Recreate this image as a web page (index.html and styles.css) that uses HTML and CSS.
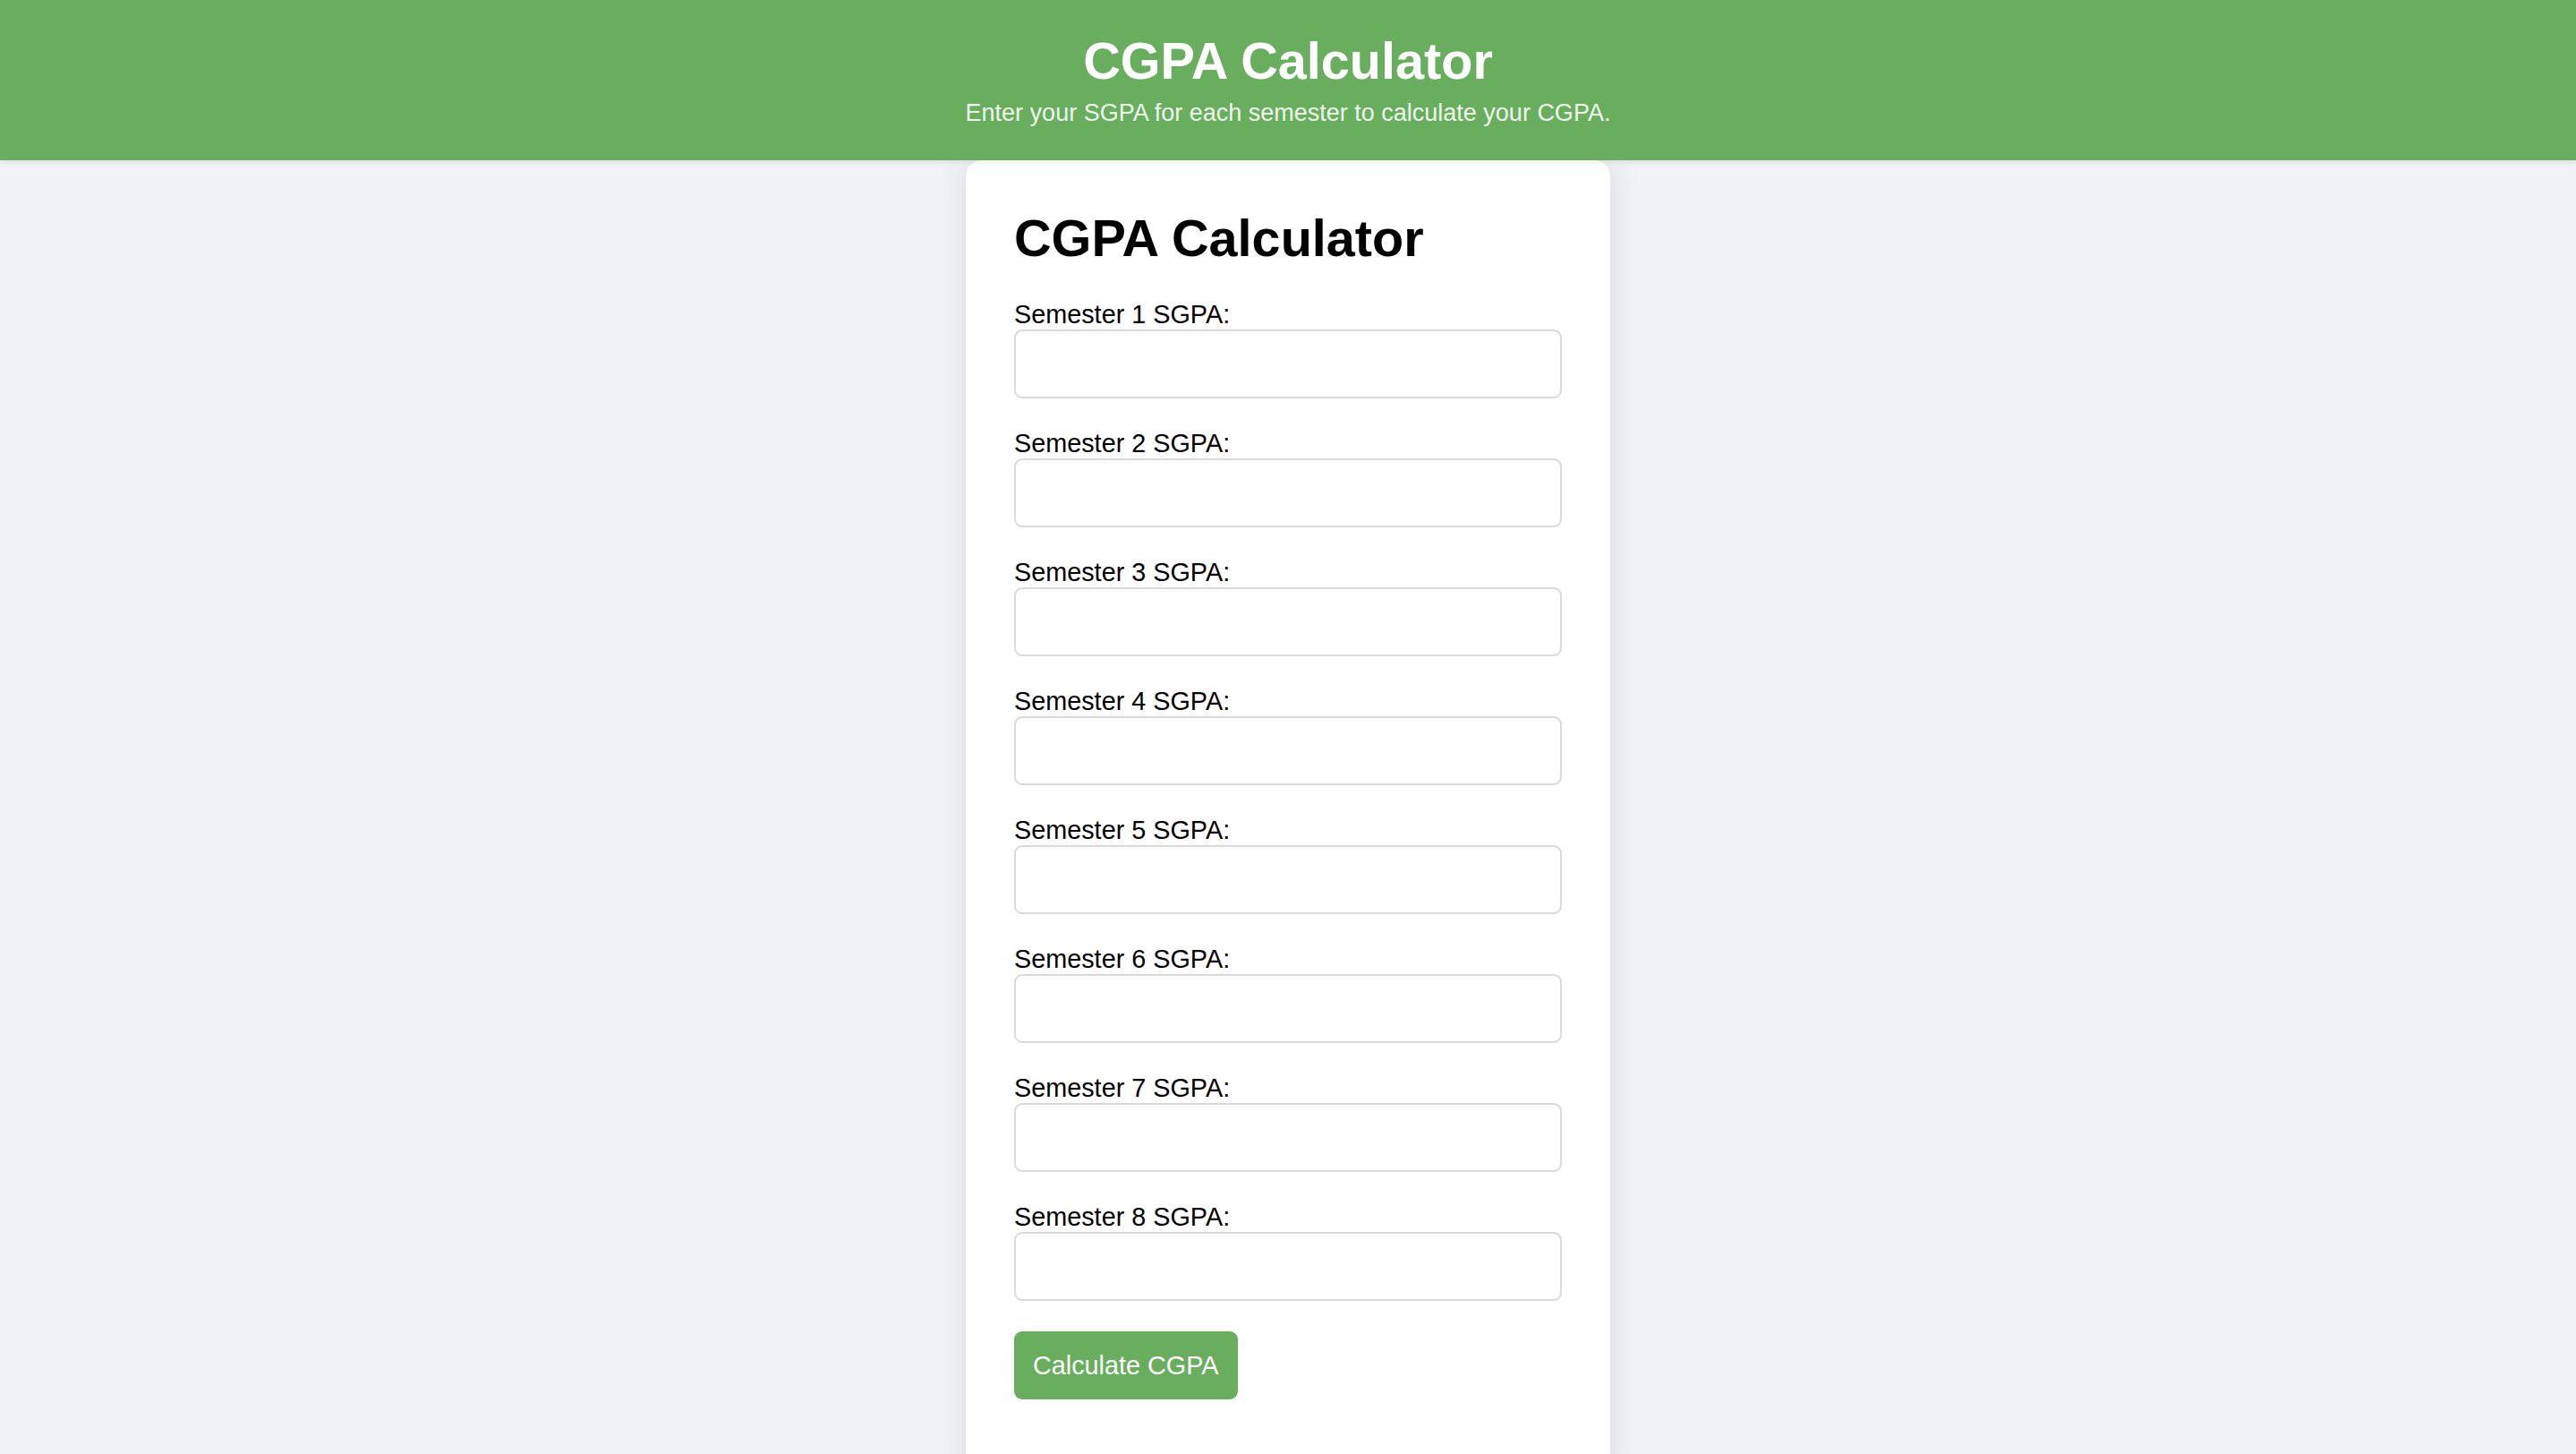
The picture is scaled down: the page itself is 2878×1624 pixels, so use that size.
FILE: index.html
```html
<!DOCTYPE html>
<html lang="en">
<head>
<meta charset="utf-8">
<title>CGPA Calculator</title>
<link rel="stylesheet" href="styles.css">
</head>
<body>
<header class="site-header">
  <h1 class="site-title">CGPA Calculator</h1>
  <p class="site-sub">Enter your SGPA for each semester to calculate your CGPA.</p>
</header>
<main class="card">
  <h1 class="card-title">CGPA Calculator</h1>
  <form class="form">
    <label class="field-label" for="s1">Semester 1 SGPA:</label>
    <input class="field" id="s1" type="number">
    <label class="field-label" for="s2">Semester 2 SGPA:</label>
    <input class="field" id="s2" type="number">
    <label class="field-label" for="s3">Semester 3 SGPA:</label>
    <input class="field" id="s3" type="number">
    <label class="field-label" for="s4">Semester 4 SGPA:</label>
    <input class="field" id="s4" type="number">
    <label class="field-label" for="s5">Semester 5 SGPA:</label>
    <input class="field" id="s5" type="number">
    <label class="field-label" for="s6">Semester 6 SGPA:</label>
    <input class="field" id="s6" type="number">
    <label class="field-label" for="s7">Semester 7 SGPA:</label>
    <input class="field" id="s7" type="number">
    <label class="field-label" for="s8">Semester 8 SGPA:</label>
    <input class="field" id="s8" type="number">
    <button class="btn" type="button">Calculate CGPA</button>
  </form>
</main>
</body>
</html>
```
FILE: styles.css
```css
* { box-sizing: border-box; }
html, body {
  margin: 0;
  padding: 0;
}
body {
  background: #f0f2f5;
  font-family: "Liberation Sans", Arial, Helvetica, sans-serif;
  color: #000;
}
.site-header {
  background: #69ae5e;
  color: #fff;
  text-align: center;
  padding: 36px 0 0;
  height: 179px;
  box-shadow: 0 2px 6px rgba(0,0,0,0.08);
  position: relative;
  z-index: 1;
}
.site-title {
  margin: 0;
  font-size: 57.6px;
  line-height: 64px;
  font-weight: bold;
}
.site-sub {
  margin: 11px 0 0;
  font-size: 27px;
  line-height: 30px;
  color: #eef7ec;
}
.card {
  display: block;
  width: 720px;
  margin: 0 auto;
  background: #fff;
  border-radius: 18px;
  padding: 55px 54px 90px;
  box-shadow: 0 0 36px rgba(0,0,0,0.1);
}
.card-title {
  margin: 0 0 37px;
  font-size: 57.6px;
  line-height: 64px;
  font-weight: bold;
}
.form {
  display: flex;
  flex-direction: column;
  align-items: flex-start;
}
.field-label {
  display: block;
  font-size: 28.8px;
  line-height: 33px;
}
.field {
  display: block;
  width: 100%;
  height: 77px;
  margin: 0 0 34px;
  border: 2px solid #dadada;
  border-radius: 9px;
  background: #fff;
  font-size: 28.8px;
  padding: 0 18px;
  font-family: inherit;
}
.btn {
  height: 76px;
  padding: 0 21px;
  background: #69ae5e;
  color: #fff;
  border: none;
  border-radius: 9px;
  font-family: inherit;
  font-size: 28.8px;
  cursor: pointer;
}
```
